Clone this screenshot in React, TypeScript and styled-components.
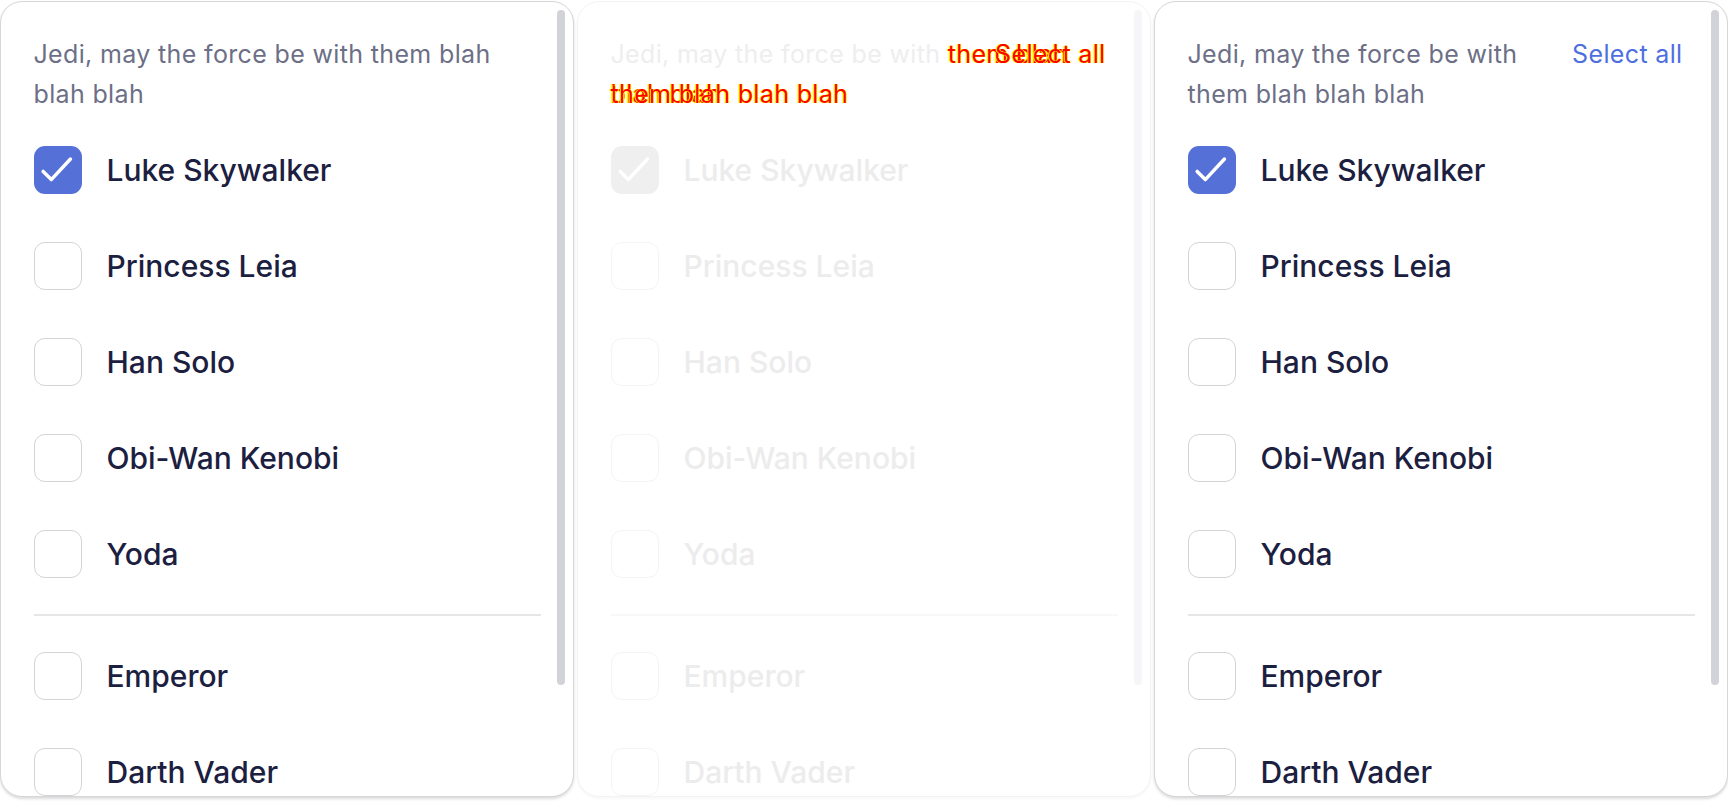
import React from "react";
import styled, { createGlobalStyle, css } from "styled-components";

const Global = createGlobalStyle`
  html, body { margin: 0; padding: 0; background: #ffffff; }
  body { font-family: Inter, "Noto Sans", sans-serif; -webkit-font-smoothing: antialiased; }
  * { box-sizing: border-box; }
`;

const Board = styled.div`
  display: grid;
  grid-template-columns: repeat(3, 574px);
  column-gap: 3px;
  width: 1728px;
  height: 802px;
  overflow: hidden;
`;

const Panel = styled.section<{ $faded?: boolean }>`
  position: relative;
  margin-top: 1px;
  height: 796px;
  overflow: hidden;
  background: #ffffff;
  border: 1.5px solid ${(p) => (p.$faded ? "#f3f3f4" : "#d6d6d9")};
  border-radius: 22px;
  box-shadow: ${(p) => (p.$faded ? "0 2px 3px rgba(0,0,0,0.03)" : "0 2px 3px rgba(0,0,0,0.14)")};
  padding: 32px 32.5px 0 32.5px;
`;

const Thumb = styled.div<{ $faded?: boolean }>`
  position: absolute;
  top: 7.5px;
  right: 8.5px;
  width: 8px;
  height: 675px;
  border-radius: 4px;
  background: ${(p) => (p.$faded ? "#f6f6f8" : "#d2d3d8")};
`;

const Header = styled.div`
  position: relative;
  display: flex;
  align-items: flex-start;
  gap: 24px;
  margin-bottom: 8px;
`;

const Description = styled.p<{ $faded?: boolean }>`
  flex: 1;
  margin: 0;
  font-size: 25px;
  line-height: 40px;
  letter-spacing: 0.35px;
  color: ${(p) => (p.$faded ? "#eeeeef" : "#6c6f86")};
`;

const SelectAll = styled.button<{ $diff?: boolean }>`
  flex: none;
  margin: 0;
  padding: 0 12px 0 0;
  border: 0;
  background: none;
  font-family: inherit;
  font-size: 25px;
  line-height: 40px;
  letter-spacing: 0.35px;
  color: #4d6fe0;
  cursor: pointer;
  ${(p) =>
    p.$diff &&
    css`
      color: #ff0000;
      text-shadow: 1px 0 #ffff00, -1px 0 #ffff00;
    `}
`;

const Diff = styled.span`
  color: #ff0000;
  text-shadow: 1px 0 #ffff00, -1px 0 #ffff00;
`;

const Ghost = styled.span`
  color: transparent;
`;

const OverlayHeader = styled.div`
  position: absolute;
  inset: 0;
  display: flex;
  align-items: flex-start;
  gap: 24px;
`;

const List = styled.div`
  display: flex;
  flex-direction: column;
`;

const Row = styled.label`
  display: flex;
  align-items: center;
  gap: 25px;
  height: 96px;
  cursor: pointer;
`;

const Box = styled.span<{ $checked?: boolean; $faded?: boolean }>`
  flex: none;
  display: flex;
  align-items: center;
  justify-content: center;
  width: 48px;
  height: 48px;
  border-radius: 11px;
  border: 1.5px solid
    ${(p) => (p.$checked ? "transparent" : p.$faded ? "#f4f4f5" : "#d4d4d8")};
  background: ${(p) =>
    p.$checked ? (p.$faded ? "#efefef" : "#5570d6") : "#ffffff"};
`;

const Label = styled.span<{ $faded?: boolean }>`
  font-size: 30px;
  font-weight: 500;
  letter-spacing: 0px;
  color: ${(p) => (p.$faded ? "#ececed" : "#1c2040")};
`;

const Divider = styled.hr<{ $faded?: boolean }>`
  margin: 12px 0;
  border: 0;
  height: 1.5px;
  background: ${(p) => (p.$faded ? "#f8f8f8" : "#e6e6e8")};
`;

const Check = () => (
  <svg width="48" height="48" viewBox="0 0 48 48" fill="none">
    <polyline
      points="8.5,25.5 17,34 37,12.5"
      stroke="#ffffff"
      strokeWidth="3.6"
      strokeLinecap="round"
      strokeLinejoin="round"
    />
  </svg>
);

const heroes = [
  { name: "Luke Skywalker", checked: true },
  { name: "Princess Leia" },
  { name: "Han Solo" },
  { name: "Obi-Wan Kenobi" },
  { name: "Yoda" },
];
const villains = [{ name: "Emperor" }, { name: "Darth Vader" }];

type Item = { name: string; checked?: boolean };

const Items: React.FC<{ faded?: boolean }> = ({ faded }) => {
  const row = (it: Item) => (
    <Row key={it.name}>
      <Box $checked={it.checked} $faded={faded}>
        {it.checked && <Check />}
      </Box>
      <Label $faded={faded}>{it.name}</Label>
    </Row>
  );
  return (
    <List>
      {heroes.map(row)}
      <Divider $faded={faded} />
      {villains.map(row)}
    </List>
  );
};

export default function App() {
  return (
    <>
      <Global />
      <Board>
        <Panel>
          <Thumb />
          <Header>
            <Description>Jedi, may the force be with them blah blah blah</Description>
          </Header>
          <Items />
        </Panel>

        <Panel $faded>
          <Thumb $faded />
          <Header>
            <Description $faded>
              Jedi, may the force be with <Diff>them blah</Diff> <Diff>blah blah</Diff>
            </Description>
            <OverlayHeader>
              <Description $faded>
                <Ghost>Jedi, may the force be with</Ghost> <Diff>them blah blah blah</Diff>
              </Description>
              <SelectAll $diff>Select all</SelectAll>
            </OverlayHeader>
          </Header>
          <Items faded />
        </Panel>

        <Panel>
          <Thumb />
          <Header>
            <Description>Jedi, may the force be with them blah blah blah</Description>
            <SelectAll>Select all</SelectAll>
          </Header>
          <Items />
        </Panel>
      </Board>
    </>
  );
}
